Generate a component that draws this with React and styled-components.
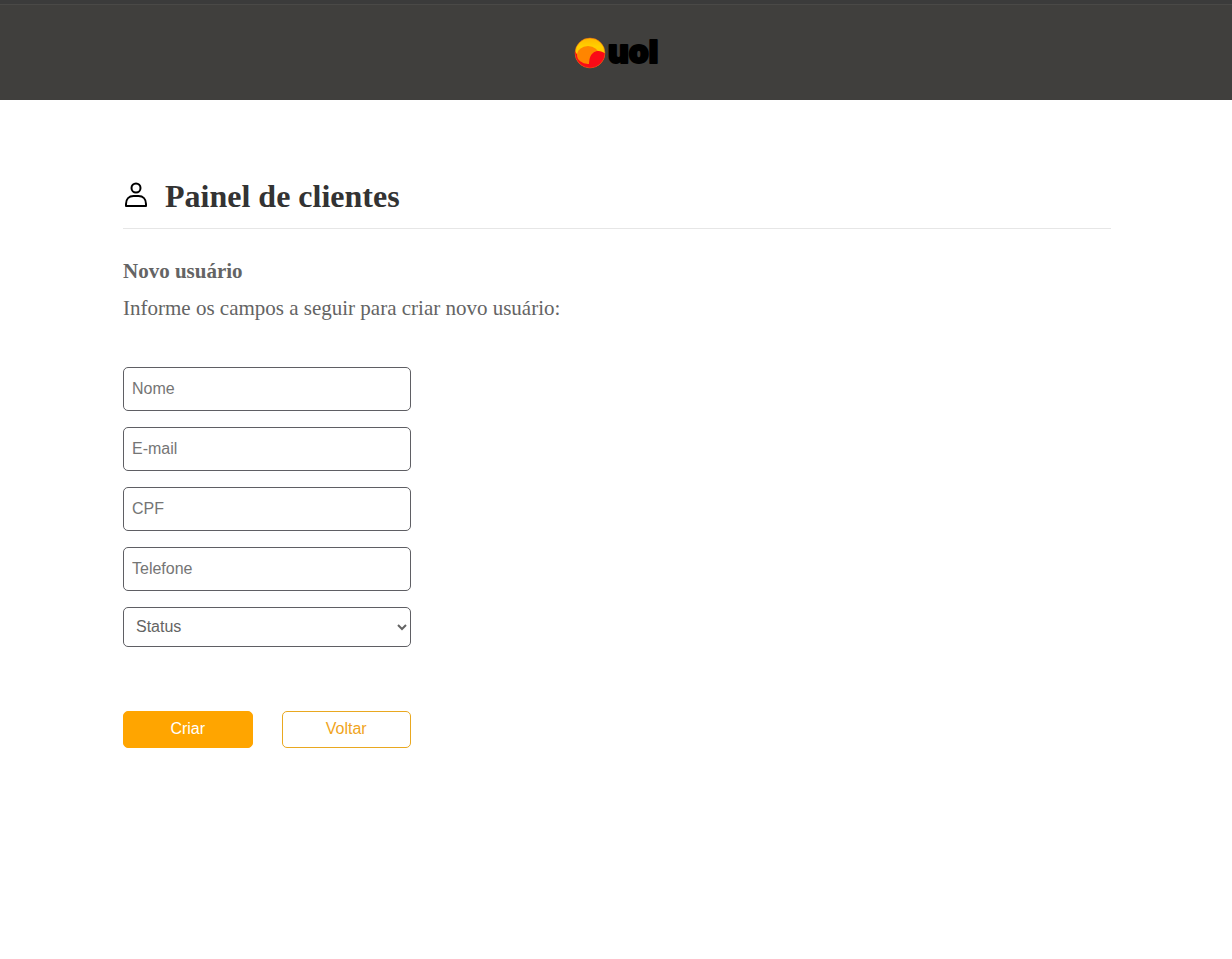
import React from "react";
import styled, { createGlobalStyle, css } from "styled-components";

const GlobalStyle = createGlobalStyle`
  *, *::before, *::after { box-sizing: border-box; }
  body {
    margin: 0;
    background: #fff;
    color: #646464;
    font-family: "Liberation Serif", "Times New Roman", serif;
  }
`;

const Header = styled.header`
  display: flex;
  align-items: center;
  justify-content: center;
  height: 100px;
  padding-top: 5px;
  background: linear-gradient(#3b3b3b 4px, #4a4947 4px, #4a4947 5px, #403f3d 5px);
`;

const Main = styled.main`
  padding: 76px 121px 40px 123px;
`;

const TitleBar = styled.div`
  display: flex;
  align-items: center;
  gap: 16px;
  padding-bottom: 12px;
  border-bottom: 1px solid #e6e6e6;
`;

const Title = styled.h1`
  margin: 0;
  color: #333;
  font-size: 32px;
  line-height: 40px;
`;

const UserIcon = styled.svg`
  flex: none;
  width: 26px;
  height: 28px;
  margin-bottom: 4px;
`;

const Intro = styled.section`
  margin-top: 30px;
  font-size: 21px;
  line-height: 24px;
`;

const Subtitle = styled.h2`
  margin: 0 0 13px;
  font-size: inherit;
`;

const Description = styled.p`
  margin: 0;
`;

const Form = styled.form`
  display: flex;
  flex-direction: column;
  gap: 16px;
  width: 288px;
  max-width: 100%;
  margin-top: 47px;
`;

const control = css`
  width: 100%;
  border: 1px solid #5f5f64;
  border-radius: 5px;
  background: #fff;
  color: #646464;
  font-family: "Liberation Sans", Arial, sans-serif;
  font-size: 16px;
`;

const Input = styled.input`
  ${control}
  height: 44px;
  padding: 0 8px;

  &::placeholder { color: #757575; }
`;

const Select = styled.select`
  ${control}
  height: 40px;
  padding: 0 0 2px 8px;
`;

const Actions = styled.div`
  display: grid;
  grid-template-columns: 1fr 1fr;
  gap: 29px;
  margin-top: 48px;
`;

const Button = styled.button`
  height: 37px;
  padding: 0 0 2px;
  border: 1px solid ${({ $outline }) => ($outline ? "#e9a820" : "#ffa500")};
  border-radius: 5px;
  background: ${({ $outline }) => ($outline ? "#fff" : "#ffa500")};
  color: ${({ $outline }) => ($outline ? "#f0a41c" : "#fff")};
  font-family: "Liberation Sans", Arial, sans-serif;
  font-size: 16px;
  cursor: pointer;
`;

const LogoSvg = styled.svg`
  display: block;
  width: 90px;
  height: 48px;
  overflow: visible;
`;

const Wordmark = styled.text`
  fill: #000;
  stroke: #000;
  stroke-width: 2px;
  stroke-linejoin: round;
  font-family: Inter, sans-serif;
  font-size: 32px;
  font-weight: 900;
`;

function Logo() {
  return (
    <LogoSvg viewBox="-2 -8 90 48" role="img" aria-label="uol">
      <defs>
        <clipPath id="ball">
          <circle cx="17" cy="16" r="15" />
        </clipPath>
        <linearGradient id="sun" x1="0" y1="0" x2="0" y2="1">
          <stop offset="0" stopColor="#ffb400" />
          <stop offset="0.3" stopColor="#ffd000" />
          <stop offset="1" stopColor="#ffb000" />
        </linearGradient>
      </defs>
      <g clipPath="url(#ball)">
        <rect x="1" width="32" height="32" fill="url(#sun)" />
        <path d="M1 11 Q2 16 7 21 Q12 27 19 27 L27 32 H1Z" fill="#fa0a16" />
        <ellipse cx="15" cy="18" rx="11" ry="9" fill="#ff8500" />
        <path d="M15 32 C17 26 15 20 20 16 C25 12 31 15 34 18 V32Z" fill="#fa0a16" />
      </g>
      <circle cx="17" cy="16" r="15" fill="none" stroke="#e85a12" strokeOpacity="0.5" />
      <Wordmark x="35" y="26">uol</Wordmark>
    </LogoSvg>
  );
}

const fields = [
  { name: "nome", label: "Nome", type: "text" },
  { name: "email", label: "E-mail", type: "email" },
  { name: "cpf", label: "CPF", type: "text" },
  { name: "telefone", label: "Telefone", type: "tel" },
];

export default function App() {
  return (
    <>
      <GlobalStyle />
      <Header>
        <Logo />
      </Header>
      <Main>
        <TitleBar>
          <UserIcon viewBox="0 0 26 28" fill="none" stroke="#000" strokeWidth="2" aria-hidden="true">
            <circle cx="13" cy="8" r="4.5" />
            <path d="M3 26V24C3 19 6 16 10.5 16H15.5C20 16 23 19 23 24V26Z" strokeLinejoin="round" />
          </UserIcon>
          <Title>Painel de clientes</Title>
        </TitleBar>
        <Intro>
          <Subtitle>Novo usuário</Subtitle>
          <Description>Informe os campos a seguir para criar novo usuário:</Description>
        </Intro>
        <Form onSubmit={(event) => event.preventDefault()}>
          {fields.map(({ name, label, type }) => (
            <Input key={name} name={name} type={type} placeholder={label} aria-label={label} />
          ))}
          <Select name="status" aria-label="Status" defaultValue="">
            <option value="">Status</option>
          </Select>
          <Actions>
            <Button type="submit">Criar</Button>
            <Button type="button" $outline>Voltar</Button>
          </Actions>
        </Form>
      </Main>
    </>
  );
}
